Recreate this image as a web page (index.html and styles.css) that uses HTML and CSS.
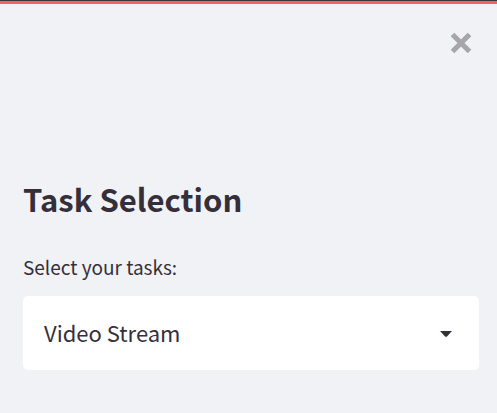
FILE: index.html
```html
<!DOCTYPE html>
<html lang="en">
<head>
<meta charset="utf-8">
<title>Task Selection</title>
<link rel="stylesheet" href="styles.css">
</head>
<body>
<aside class="sidebar">
  <div class="sidebar-top">
    <button class="close" type="button" aria-label="Close">
      <svg viewBox="0 0 22 22" aria-hidden="true"><path d="M2.5 2.5L19.5 19.5M19.5 2.5L2.5 19.5"/></svg>
    </button>
  </div>
  <h1 class="title">Task Selection</h1>
  <div class="field">
    <label class="label" for="task">Select your tasks:</label>
    <div class="select-wrap">
      <select class="select" id="task">
        <option>Video Stream</option>
      </select>
      <svg class="caret" viewBox="0 0 12 6" aria-hidden="true"><path d="M0 0H12L7 5.4Q6 6.3 5 5.4Z"/></svg>
    </div>
  </div>
</aside>
</body>
</html>
```
FILE: styles.css
```css
* {
  box-sizing: border-box;
}

body {
  margin: 0;
  background: #f0f2f6;
  color: #352f3a;
  font-family: "Source Sans Pro", "Noto Sans CJK SC", sans-serif;
}

.sidebar {
  min-height: 100vh;
  padding: 0 18px 0 23px;
  border-top: 1px solid #3a3344;
}

.sidebar::before {
  content: "";
  display: block;
  height: 3px;
  margin: 0 -18px 0 -23px;
  background: #ee655f;
}

.sidebar-top {
  display: flex;
  justify-content: flex-end;
  padding: 28px 7px 0 0;
}

.close {
  width: 22px;
  height: 22px;
  padding: 0;
  border: 0;
  background: none;
}

.close svg {
  display: block;
  fill: none;
  stroke: #a5a5aa;
  stroke-width: 5;
}

.title {
  margin: 123px 0 0;
  font-size: 31px;
  line-height: 44px;
  font-weight: 700;
}

.field {
  display: flex;
  flex-direction: column;
  gap: 15px;
  margin-top: 32px;
}

.label {
  font-size: 19px;
  line-height: 28px;
}

.select-wrap {
  position: relative;
}

.select {
  display: block;
  width: 100%;
  height: 74px;
  padding: 0 48px 2px 21px;
  border: 0;
  border-radius: 5px;
  appearance: none;
  background: #fff;
  color: inherit;
  font-family: inherit;
  font-size: 22px;
}

.caret {
  position: absolute;
  top: 35px;
  right: 27px;
  width: 12px;
  height: 6px;
  fill: #352f3a;
  pointer-events: none;
}
```
